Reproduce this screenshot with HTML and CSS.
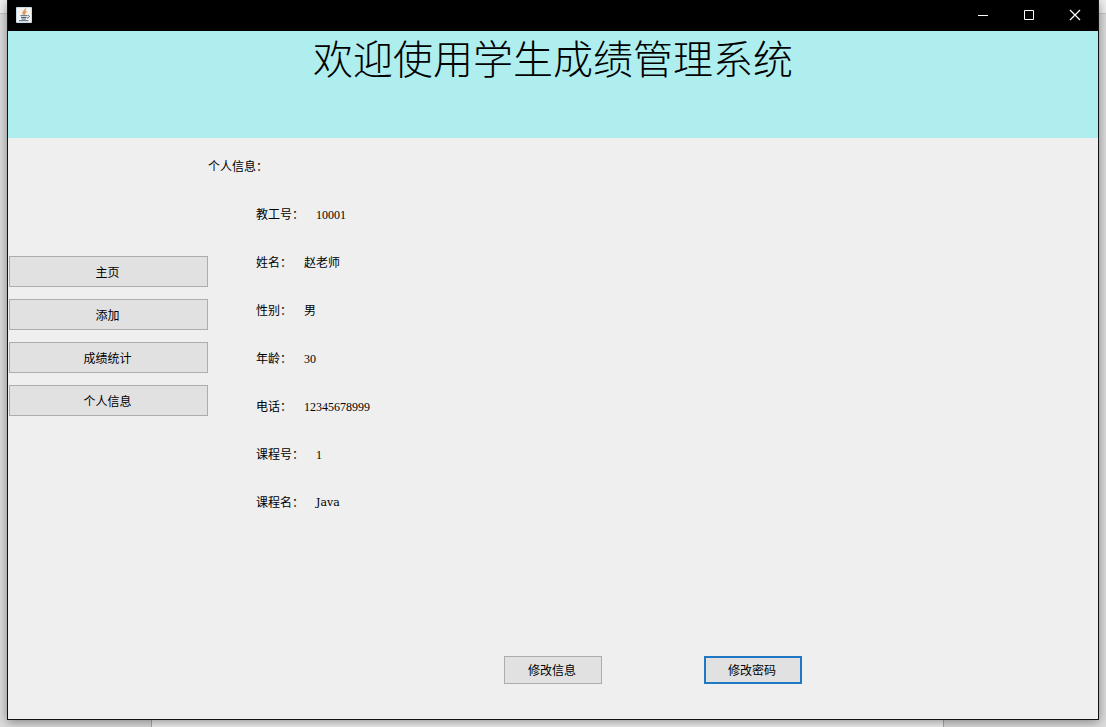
FILE: index.html
```html
<!DOCTYPE html>
<html lang="zh-CN">
<head>
<meta charset="utf-8">
<title>学生成绩管理系统</title>
<link rel="stylesheet" href="styles.css">
</head>
<body>
<div class="window">
  <header class="titlebar">
    <svg class="app-icon" viewBox="0 0 16 16" aria-hidden="true">
      <rect width="16" height="16" rx="1" fill="#c9dbe8"/>
      <rect x="1" y="1" width="14" height="14" fill="#f3f3f2"/>
      <path d="M9.500 1.500C10 4 5.500 4.500 7.500 7.500M10.500 4.500C7.500 5.500 8.500 6.500 8.500 8" fill="none" stroke="#dc9a5c" stroke-width="1.500"/>
      <path d="M4.500 8.700h6.500M5 10.500h5.500M5.500 12h4.500M3 13.700h9.500M11.500 8.500c2.500-.5 2.500 2-.5 2.700" fill="none" stroke="#4d6478" stroke-width="1"/>
    </svg>
    <div class="controls">
      <button class="control" type="button" aria-label="最小化"><svg viewBox="0 0 12 12"><path d="M1 6.500h10"/></svg></button>
      <button class="control" type="button" aria-label="最大化"><svg viewBox="0 0 12 12"><path d="M1.500 1.500h9v9h-9z"/></svg></button>
      <button class="control" type="button" aria-label="关闭"><svg viewBox="0 0 12 12"><path d="M1 1l10 10M11 1L1 11" stroke-width="1.300"/></svg></button>
    </div>
  </header>
  <div class="banner"><h1>欢迎使用学生成绩管理系统</h1></div>
  <div class="body">
    <nav class="sidebar">
      <button class="button" type="button">主页</button>
      <button class="button" type="button">添加</button>
      <button class="button" type="button">成绩统计</button>
      <button class="button" type="button">个人信息</button>
    </nav>
    <main class="content">
      <h2>个人信息：</h2>
      <dl class="details">
        <div class="row"><dt>教工号：</dt><dd>10001</dd></div>
        <div class="row"><dt>姓名：</dt><dd>赵老师</dd></div>
        <div class="row"><dt>性别：</dt><dd>男</dd></div>
        <div class="row"><dt>年龄：</dt><dd>30</dd></div>
        <div class="row"><dt>电话：</dt><dd>12345678999</dd></div>
        <div class="row"><dt>课程号：</dt><dd>1</dd></div>
        <div class="row"><dt>课程名：</dt><dd class="latin">Java</dd></div>
      </dl>
      <div class="actions">
        <button class="button" type="button">修改信息</button>
        <button class="button focused" type="button">修改密码</button>
      </div>
    </main>
  </div>
</div>
<footer class="desktop"></footer>
</body>
</html>
```
FILE: styles.css
```css
* { box-sizing: border-box; }

body {
  display: flex;
  flex-direction: column;
  min-height: 100vh;
  margin: 0;
  padding: 0 7px;
  background: linear-gradient(#f0f0f0 0 13px, #c8c8c8 13px 14px, #dcdcdc 14px);
  color: #000;
  font: 12px/16px "Liberation Serif", "Noto Sans CJK SC", sans-serif;
}

.window {
  position: relative;
  display: flex;
  flex: 1;
  flex-direction: column;
  border: 1px solid #111;
  border-top: 0;
  background: #efefef;
  box-shadow: 0 2px 10px rgba(0, 0, 0, 0.4);
}

.titlebar {
  display: flex;
  align-items: center;
  height: 31px;
  padding: 0 0 1px 8px;
  background: #000;
}

.app-icon { width: 16px; height: 16px; }

.controls {
  display: flex;
  height: 100%;
  margin-left: auto;
}

.control {
  display: flex;
  align-items: center;
  justify-content: center;
  width: 46px;
  padding: 0;
  border: 0;
  background: none;
}

.control svg {
  width: 12px;
  height: 12px;
  fill: none;
  stroke: #fff;
}

.banner {
  height: 107px;
  background: #afeeee;
}

h1 {
  margin: 0;
  font-size: 40px;
  font-weight: 300;
  line-height: 60px;
  text-align: center;
}

.body {
  display: flex;
  flex: 1;
}

.sidebar {
  display: flex;
  flex: 0 0 200px;
  flex-direction: column;
  gap: 12px;
  padding: 118px 0 0 1px;
}

.button {
  height: 31px;
  padding: 2px 2px 0 0;
  border: 1px solid #adadad;
  border-radius: 0;
  background: #e1e1e1;
  color: #000;
  font: inherit;
}

.content {
  display: flex;
  flex: 1;
  flex-direction: column;
  padding: 21px 0 35px;
}

h2 {
  margin: 0;
  font: inherit;
}

.details {
  display: flex;
  flex-direction: column;
  gap: 32px;
  margin: 32px 0 0 48px;
}

.row {
  display: flex;
  gap: 12px;
}

dd { margin: 0; }

.latin { font-family: "DejaVu Serif", serif; font-size: 11px; }

.actions {
  display: flex;
  gap: 102px;
  justify-content: center;
  margin-top: auto;
}

.actions .button {
  width: 98px;
  height: 28px;
}

.actions .focused { border: 2px solid #1f78c1; }

.desktop {
  height: 7px;
  margin: 0 155px 0 144px;
  border: solid #aaa;
  border-width: 0 1px;
  background: #f0f0f0;
}
```
